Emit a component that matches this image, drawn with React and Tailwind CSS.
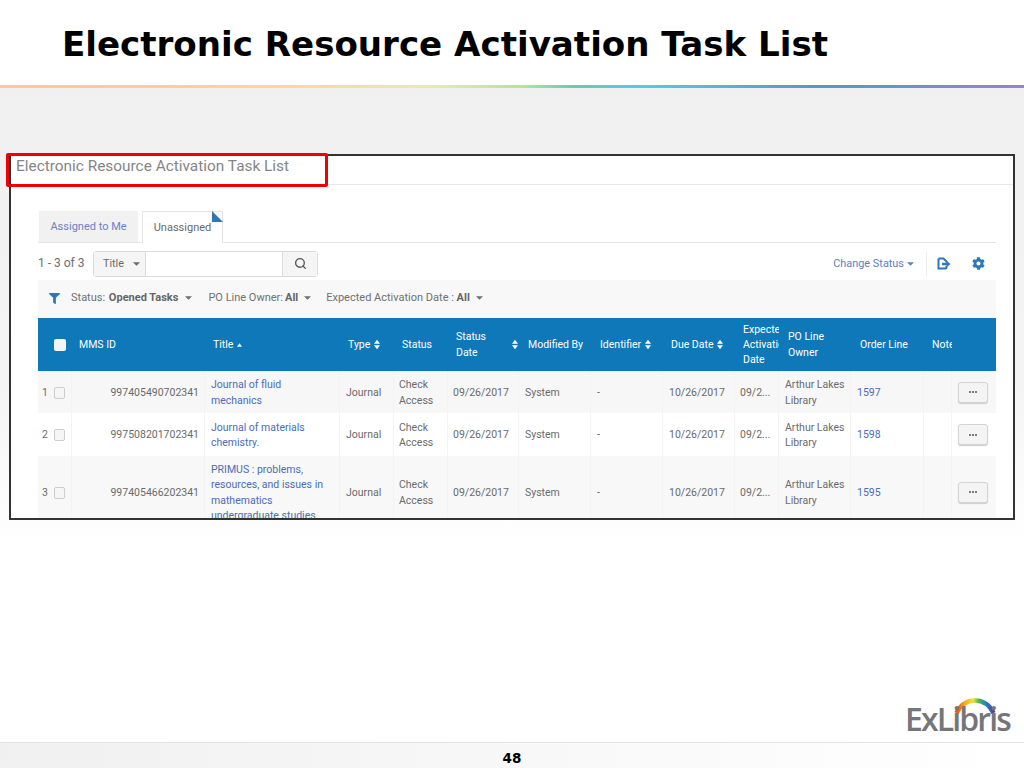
import React from "react";
import { Search } from "lucide-react";
import { FaCog, FaFilter } from "react-icons/fa";

/* ===== Helpers ===== */
const Caret = ({ className = "" }) => (
  <svg viewBox="0 0 8 4" className={`w-[7px] h-[4px] ${className}`}>
    <polygon points="0,0 8,0 4,4" fill="currentColor" />
  </svg>
);

const SortArrows = ({ className = "" }) => (
  <svg viewBox="0 0 7 12" className={`w-[6px] h-[11px] shrink-0 ${className}`}>
    <polygon points="0,5 7,5 3.5,0.5" fill="#fff" />
    <polygon points="0,7 7,7 3.5,11.5" fill="#fff" />
  </svg>
);

const ExportIcon = () => (
  <svg viewBox="0 0 14 13" className="w-[14px] h-[13px] text-[#2f78b5]">
    <path d="M1.5 1.5h5l3 3v1M9.5 9v1.5a1 1 0 0 1-1 1h-7V1.5" fill="none" stroke="currentColor" strokeWidth="2" />
    <polygon points="5,5.8 9.5,5.8 9.5,3.8 13.5,7 9.5,10.2 9.5,8.2 5,8.2" fill="currentColor" />
  </svg>
);

const Checkbox = () => (
  <span className="block w-[11px] h-[12px] rounded-[2px] border border-[#cccccc] bg-[#f6f6f6]" />
);

const rowGrid =
  "grid grid-cols-[34px_133px_135px_54px_54px_71px_72px_72px_72px_44px_72px_73px_28px_44px]";

const tasks = [
  { n: 1, id: "997405490702341", title: ["Journal of fluid", "mechanics"], line: "1597", h: "h-[42px]", bg: "bg-[#f7f7f7]" },
  { n: 2, id: "997508201702341", title: ["Journal of materials", "chemistry."], line: "1598", h: "h-[43px]", bg: "bg-white" },
  {
    n: 3,
    id: "997405466202341",
    title: ["PRIMUS : problems,", "resources, and issues in", "mathematics", "undergraduate studies."],
    line: "1595",
    h: "h-[72px]",
    bg: "bg-[#f8f8f8]",
  },
];

const Cell = ({ children, className = "" }) => (
  <div className={`flex items-center pt-px border-r border-[#f3f3f3] overflow-hidden whitespace-nowrap ${className}`}>
    <div>{children}</div>
  </div>
);

const TaskRow = ({ task }) => (
  <div className={`${rowGrid} ${task.h} ${task.bg} text-[#6a6a6a]`}>
    <div className="flex items-center pt-px pl-[4px] gap-[6px] border-r border-[#f3f3f3]">
      <span>{task.n}</span>
      <Checkbox />
    </div>
    <Cell className="justify-end pr-[5px]">{task.id}</Cell>
    <Cell className="pl-[6px] text-[#4b6cb7]">
      {task.title.map((t) => (
        <div key={t}>{t}</div>
      ))}
    </Cell>
    <Cell className="pl-[6px]">Journal</Cell>
    <Cell className="pl-[5px]">
      <div>Check</div>
      <div>Access</div>
    </Cell>
    <Cell className="pl-[5px]">09/26/2017</Cell>
    <Cell className="pl-[6px]">System</Cell>
    <Cell className="pl-[6px]">-</Cell>
    <Cell className="pl-[6px]">10/26/2017</Cell>
    <Cell className="pl-[5px]">09/2...</Cell>
    <Cell className="pl-[6px]">
      <div>Arthur Lakes</div>
      <div>Library</div>
    </Cell>
    <Cell className="pl-[6px] text-[#4b6cb7]">{task.line}</Cell>
    <Cell />
    <div className="flex items-center justify-start pl-[6px]">
      <button className="w-[30px] h-[21px] rounded-[3px] border border-[#d4d4d4] bg-[#f4f4f4] shadow-[0_1px_1px_#ccc] text-[#555] flex items-center justify-center gap-[1px]">
        <span className="w-[2px] h-[2px] rounded-full bg-[#555]" />
        <span className="w-[2px] h-[2px] rounded-full bg-[#555]" />
        <span className="w-[2px] h-[2px] rounded-full bg-[#555]" />
      </button>
    </div>
  </div>
);

const HeadCell = ({ children, className = "" }) => (
  <div className={`flex items-center overflow-hidden whitespace-nowrap ${className}`}>{children}</div>
);

export default function App() {
  return (
    <div className="w-[1024px] h-[768px] flex flex-col overflow-hidden bg-white font-['Roboto',sans-serif]">
      {/* ===== SLIDE TITLE ===== */}
      <div className="h-[85px] shrink-0 pl-[62px] pt-[21px]">
        <h1 className="font-['DejaVu_Sans',sans-serif] font-bold text-[34.1px] leading-[46px] text-black whitespace-nowrap">
          Electronic Resource Activation Task List
        </h1>
      </div>
      <div className="h-[3px] shrink-0 bg-[linear-gradient(90deg,#f8c99a_0%,#f8cf90_15%,#f9dc8f_30%,#e6eda8_42%,#b5e39c_51%,#5fcfb6_56%,#55cbe0_63%,#4f9dc0_80%,#9a83c9_100%)]" />

      {/* ===== SLIDE BODY ===== */}
      <div className="flex-1 min-h-0 flex flex-col bg-[linear-gradient(180deg,#f0f0f0_0%,#f4f4f4_45%,#ffffff_70%)]">
        <div className="relative mt-[66px] mx-[9px] h-[366px] shrink-0 border-2 border-[#333] bg-white">
          {/* screenshot, clipped to its frame */}
          <div className="h-full overflow-hidden text-[10.5px] leading-[15.3px]">
            <div className="h-[29px] pl-[5px] pb-[6px] flex items-center border-b border-[#e8e8e8] text-[#858585] text-[15.4px]">
              Electronic Resource Activation Task List
            </div>

            <div className="pl-[27px] pr-[17px]">
              {/* tabs */}
              <div className="mt-[26px] h-[32px] pl-px flex items-end border-b border-[#e4e4e4] text-[11px]">
                <div className="w-[99px] h-[31px] flex items-center justify-center bg-[#f1f1f1] text-[#6b80c4]">
                  Assigned to Me
                </div>
                <div className="relative ml-[4px] w-[81px] h-[32px] -mb-px flex items-center justify-center bg-white border border-b-0 border-[#e4e4e4] text-[#6a6a6a]">
                  Unassigned
                  <svg viewBox="0 0 10 10" className="absolute -top-px -right-px w-[11px] h-[11px]">
                    <polygon points="0,0 10,10 0,10" fill="#2f78b5" />
                  </svg>
                </div>
              </div>

              {/* toolbar */}
              <div className="mt-[7px] h-[27px] flex items-center">
                <span className="w-[55px] pt-px text-[12px] text-[#6e6e6e]">1 - 3 of 3</span>
                <div className="flex h-[26px] w-[225px] rounded-[3px] border border-[#dcdcdc] text-[#6a6a6a]">
                  <div className="w-[51px] flex items-center pl-[9px] gap-[9px] bg-[#f5f5f5] text-[10.8px]">
                    Title
                    <Caret />
                  </div>
                  <div className="flex-1 bg-white border-x border-[#dcdcdc]" />
                  <div className="w-[34px] flex items-center justify-center bg-[#f5f5f5]">
                    <Search size={13} strokeWidth={2.5} className="text-[#555]" />
                  </div>
                </div>
                <div className="ml-auto flex items-center text-[#5b82b8] text-[10.9px]">
                  <span>Change Status</span>
                  <Caret className="ml-[3px]" />
                  <span className="ml-[12px] w-px h-[24px] bg-[#eeeeee]" />
                  <span className="ml-[10px]">
                    <ExportIcon />
                  </span>
                  <FaCog className="ml-[21px] mr-[11px] w-[13px] h-[13px] text-[#2f78b5]" />
                </div>
              </div>

              {/* filter bar */}
              <div className="mt-[3px] h-[38px] pb-[2px] flex items-center pl-[11px] bg-[#f8f8f8] text-[#707070] text-[11px]">
                <FaFilter className="w-[11px] h-[11px] text-[#2f78b5] mr-[11px]" />
                <span className="mr-px">Status:&nbsp;</span>
                <span className="font-bold text-[#666]">Opened Tasks</span>
                <Caret className="ml-[7px]" />
                <span className="ml-[16px]">PO Line Owner:</span>
                <span className="ml-[2px] font-bold text-[#666]">All</span>
                <Caret className="ml-[6px]" />
                <span className="ml-[15px]">Expected Activation Date :&nbsp;</span>
                <span className="font-bold text-[#666]">All</span>
                <Caret className="ml-[6px]" />
              </div>

              {/* table header */}
              <div className={`${rowGrid} h-[53px] bg-[#0f78b8] text-white`}>
                <HeadCell className="pl-[16px]">
                  <span className="block w-[12px] h-[12px] rounded-[2px] bg-[#f5f5f5]" />
                </HeadCell>
                <HeadCell className="pl-[7px]">MMS ID</HeadCell>
                <HeadCell className="pl-[8px] gap-[4px]">
                  Title
                  <svg viewBox="0 0 6 4" className="w-[5px] h-[4px]">
                    <polygon points="0,4 6,4 3,0" fill="#fff" />
                  </svg>
                </HeadCell>
                <HeadCell className="pl-[8px] gap-[4px]">
                  Type
                  <SortArrows />
                </HeadCell>
                <HeadCell className="pl-[8px]">Status</HeadCell>
                <HeadCell className="pl-[8px] gap-[26px]">
                  <div>
                    <div>Status</div>
                    <div>Date</div>
                  </div>
                  <SortArrows />
                </HeadCell>
                <HeadCell className="pl-[9px]">Modified By</HeadCell>
                <HeadCell className="pl-[9px] gap-[4px]">
                  Identifier
                  <SortArrows />
                </HeadCell>
                <HeadCell className="pl-[8px] gap-[4px]">
                  Due Date
                  <SortArrows />
                </HeadCell>
                <HeadCell className="pl-[8px]">
                  <div>
                    <div>Expected</div>
                    <div>Activation</div>
                    <div>Date</div>
                  </div>
                </HeadCell>
                <HeadCell className="pl-[9px]">
                  <div>
                    <div>PO Line</div>
                    <div>Owner</div>
                  </div>
                </HeadCell>
                <HeadCell className="pl-[9px]">Order Line</HeadCell>
                <HeadCell className="pl-[8px]">Notes</HeadCell>
                <HeadCell />
              </div>

              {/* table rows */}
              {tasks.map((task) => (
                <TaskRow key={task.n} task={task} />
              ))}
            </div>
          </div>

          {/* red highlight drawn on top of the screenshot */}
          <div className="absolute -left-[5px] -top-[3px] w-[322px] h-[34px] border-[3px] border-[#f00000] rounded-[2px] pointer-events-none" />
        </div>

        {/* logo */}
        <div className="relative mt-auto self-end mr-[13px] mb-[6px] h-[38px] w-[104px]">
          <svg viewBox="0 0 42 16" className="absolute left-[47px] top-0 w-[42px] h-[16px]">
            <defs>
              <linearGradient id="arc" x1="0" x2="1" y1="0" y2="0">
                <stop offset="0%" stopColor="#e8501e" />
                <stop offset="22%" stopColor="#f5a81c" />
                <stop offset="45%" stopColor="#f2e33b" />
                <stop offset="60%" stopColor="#4fb848" />
                <stop offset="78%" stopColor="#1e88c9" />
                <stop offset="100%" stopColor="#5b3f99" />
              </linearGradient>
            </defs>
            <path d="M2.5 15C7 6 13 2.5 21 2.5S35 6 39.5 15" fill="none" stroke="url(#arc)" strokeWidth="4.5" />
          </svg>
          <span className="absolute -left-[2px] -bottom-[2px] font-['Open_Sans',sans-serif] font-semibold text-[32px] leading-[38px] tracking-[-1.9px] text-[#757678] whitespace-nowrap">
            ExLibris
          </span>
        </div>
      </div>

      {/* ===== SLIDE FOOTER ===== */}
      <div className="h-[26px] shrink-0 pt-[5px] flex items-center justify-center border-t border-[#e4e4e4] bg-[linear-gradient(90deg,#f0f0f0_0%,#ffffff_100%)]">
        <span className="font-['DejaVu_Sans',sans-serif] font-bold text-[13.5px] text-black">48</span>
      </div>
    </div>
  );
}
